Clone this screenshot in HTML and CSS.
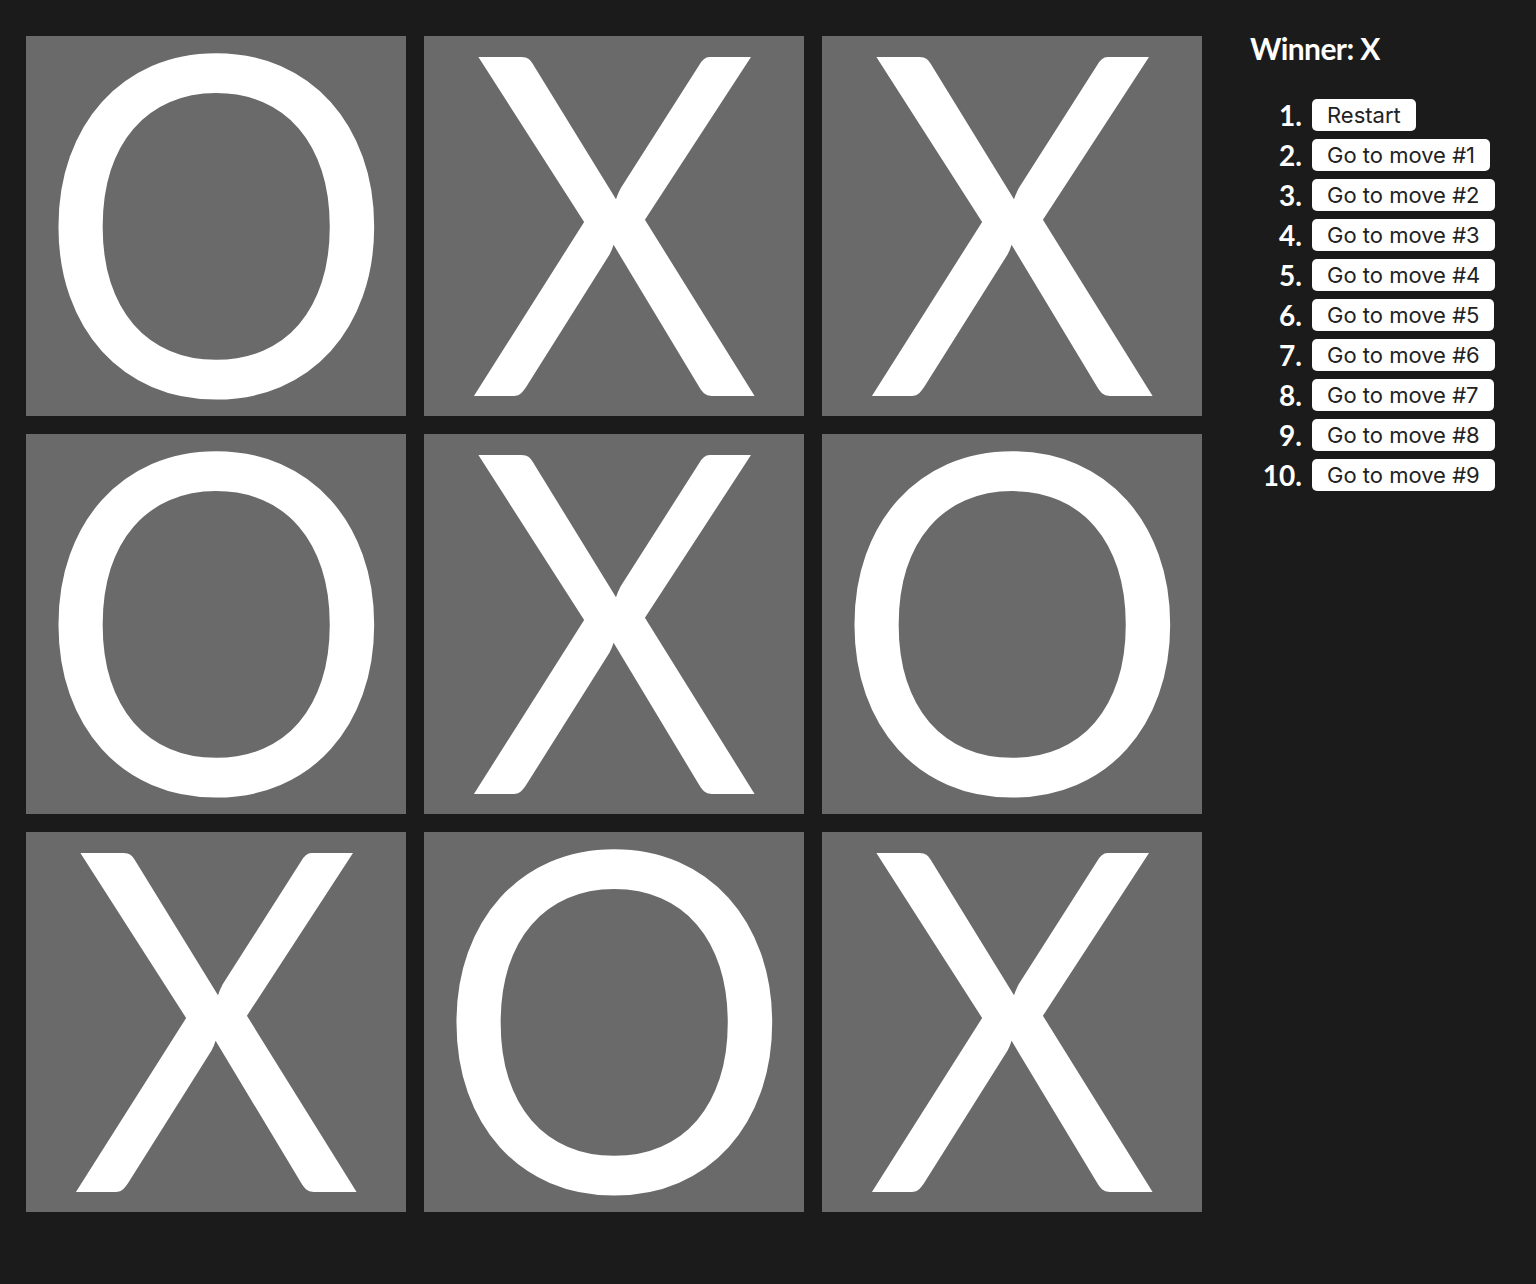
FILE: index.html
```html
<!DOCTYPE html>
<html>
<head>
<meta charset="utf-8">
<link rel="stylesheet" href="styles.css">
</head>
<body>
<div class="game">
  <div class="board">
    <div class="square"><span class="mark">O</span></div>
    <div class="square"><span class="mark">X</span></div>
    <div class="square"><span class="mark">X</span></div>
    <div class="square"><span class="mark">O</span></div>
    <div class="square"><span class="mark">X</span></div>
    <div class="square"><span class="mark">O</span></div>
    <div class="square"><span class="mark">X</span></div>
    <div class="square"><span class="mark">O</span></div>
    <div class="square"><span class="mark">X</span></div>
  </div>
  <div class="info">
    <div class="status">Winner: X</div>
    <ol class="moves">
      <li><button class="move">Restart</button></li>
      <li><button class="move">Go to move #1</button></li>
      <li><button class="move">Go to move #2</button></li>
      <li><button class="move">Go to move #3</button></li>
      <li><button class="move">Go to move #4</button></li>
      <li><button class="move">Go to move #5</button></li>
      <li><button class="move">Go to move #6</button></li>
      <li><button class="move">Go to move #7</button></li>
      <li><button class="move">Go to move #8</button></li>
      <li><button class="move">Go to move #9</button></li>
    </ol>
  </div>
</div>
</body>
</html>
```
FILE: styles.css
```css
html, body {
  margin: 0;
  padding: 0;
  background: #1b1b1b;
  height: 100%;
}
body {
  font-family: "Lato", "Liberation Sans", sans-serif;
  color: #fff;
}
.game {
  display: flex;
  padding: 36px 0 0 26px;
}
.board {
  display: grid;
  grid-template-columns: repeat(3, 380px);
  grid-template-rows: repeat(3, 380px);
  gap: 18px;
}
.square {
  background: #6a6a6a;
  display: flex;
  align-items: center;
  justify-content: center;
  overflow: hidden;
  box-sizing: border-box;
  padding-bottom: 26px;
}
.mark {
  font-family: "Lato", "Liberation Sans", sans-serif;
  font-size: 473px;
  line-height: 300px;
  color: #fff;
  transform: scaleX(0.945);
}
.info {
  margin-left: 48px;
}
.status {
  font-size: 30px;
  font-weight: 700;
  letter-spacing: -0.6px;
  line-height: 24px;
}
.moves {
  list-style: none;
  margin: 39px 0 0 0;
  padding: 0;
  counter-reset: mv;
}
.moves li {
  counter-increment: mv;
  display: flex;
  align-items: center;
  height: 32px;
  margin-bottom: 8px;
}
.moves li::before {
  content: counter(mv) ".";
  width: 52px;
  text-align: right;
  margin-right: 10px;
  font-size: 28px;
  font-weight: 700;
}
.move {
  font-family: "Inter", "Liberation Sans", sans-serif;
  font-size: 22px;
  height: 32px;
  padding: 0 15px;
  background: #fff;
  color: #222;
  border: none;
  border-radius: 5px;
}
```
